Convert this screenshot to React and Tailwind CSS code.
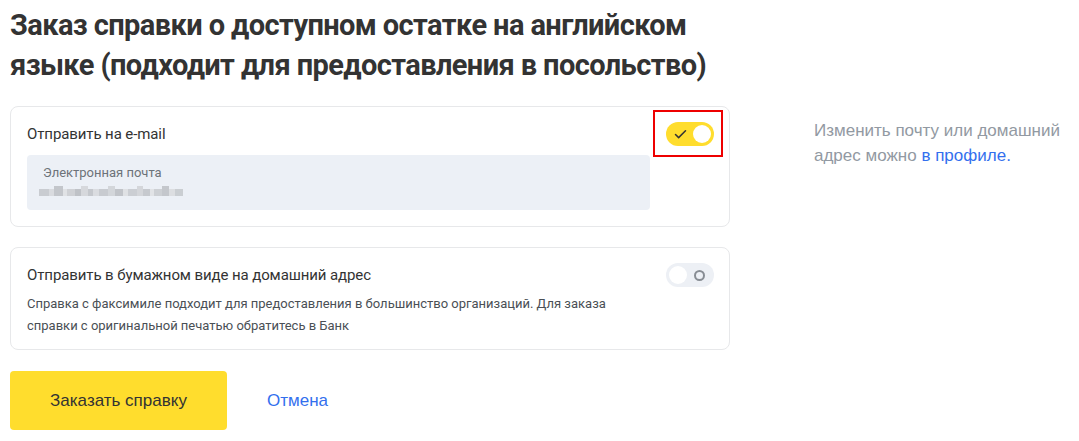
import { Check } from 'lucide-react'

const BLOCKS = [
  ['#c9ccd1', 10], ['#d9dbdf', 5], ['#c3c6cb', 9], ['#e0e2e5', 4], ['#cfd1d5', 8], ['#bfc2c7', 6], ['#d6d8dc', 7],
  ['#c5c8cd', 5], ['#dadce0', 6], ['#c8cbd0', 9], ['#d3d6da', 7], ['#c1c4c9', 8], ['#dfe1e4', 5], ['#cbced3', 9],
  ['#d4d6da', 6], ['#c6c9ce', 7], ['#e1e3e6', 4], ['#cdd0d4', 8], ['#c4c7cc', 7], ['#dcdee1', 6], ['#caced2', 8],
]

function Toggle({ on }) {
  return on ? (
    <div className="w-12 h-6 rounded-full bg-[#ffdd2d] flex items-center justify-between pl-[7px] pr-[3px]">
      <Check size={15} strokeWidth={2.4} className="text-[#333]" />
      <div className="w-[18px] h-[18px] rounded-full bg-white" />
    </div>
  ) : (
    <div className="w-12 h-6 rounded-full bg-[#edf0f5] flex items-center justify-between pl-[3px] pr-[9px]">
      <div className="w-[18px] h-[18px] rounded-full bg-white" />
      <div className="w-[11px] h-[11px] rounded-full border-2 border-[#888d94]" />
    </div>
  )
}

export default function App() {
  return (
    <div className="bg-white w-[1079px] h-[441px] overflow-hidden px-[10px] pt-[5px] text-[#333] font-['Roboto',sans-serif]">
      <h1 className="font-bold text-[29px] leading-[40px] tracking-[-0.6px] text-[#333] whitespace-nowrap">
        Заказ справки о доступном остатке на английском<br />языке (подходит для предоставления в посольство)
      </h1>

      <div className="flex mt-[21px] gap-[84px]">
        <div className="w-[720px] shrink-0">
          <div className="border border-[#e7e8ea] rounded-lg px-4 pt-[10px] pb-4">
            <div className="flex items-center justify-between">
              <span className="text-[15px] leading-[34px] tracking-[-0.1px]">Отправить на e-mail</span>
              <div className="relative -mr-[1px]">
                <Toggle on />
                <div className="absolute -left-[13px] -top-[12px] w-[70px] h-[47px] border-2 border-[#ee0000]" />
              </div>
            </div>
            <div className="mt-[4px] mr-[63px] bg-[#ecf0f6] rounded-[4px] h-[55px] px-4 pt-[10px]">
              <div className="text-[13px] leading-[15px] text-[#6d7379]">Электронная почта</div>
              <div className="flex items-end h-[10px] mt-[6px] -ml-[4px]">
                {BLOCKS.map(([c, w], i) => (
                  <div key={i} style={{ background: c, width: w, height: i % 4 === 2 ? 10 : 7 }} />
                ))}
              </div>
            </div>
          </div>

          <div className="mt-[20px] border border-[#e7e8ea] rounded-lg px-4 pt-[11px] pb-[12px]">
            <div className="flex items-center justify-between">
              <span className="text-[15px] leading-[32px] tracking-[-0.1px]">Отправить в бумажном виде на домашний адрес</span>
              <div className="-mr-[1px]"><Toggle /></div>
            </div>
            <p className="mt-[2px] text-[13px] leading-[22px] text-[#4a4f55] w-[620px]">
              Справка с факсимиле подходит для предоставления в большинство организаций. Для заказа<br />справки с оригинальной печатью обратитесь в Банк
            </p>
          </div>

          <div className="mt-[21px] flex items-center gap-10">
            <button className="w-[217px] h-[59px] rounded-[4px] bg-[#ffdd2d] text-[17px] text-[#333] font-['Liberation_Sans',sans-serif]">
              Заказать справку
            </button>
            <a className="text-[17px] text-[#336fee] font-['Liberation_Sans',sans-serif]">Отмена</a>
          </div>
        </div>

        <div className="pt-[12px] text-[17px] leading-[25px] text-[#9299a2] font-['Liberation_Sans',sans-serif] w-[260px]">
          Изменить почту или домашний адрес можно <a className="text-[#336fee]">в профиле.</a>
        </div>
      </div>
    </div>
  )
}
